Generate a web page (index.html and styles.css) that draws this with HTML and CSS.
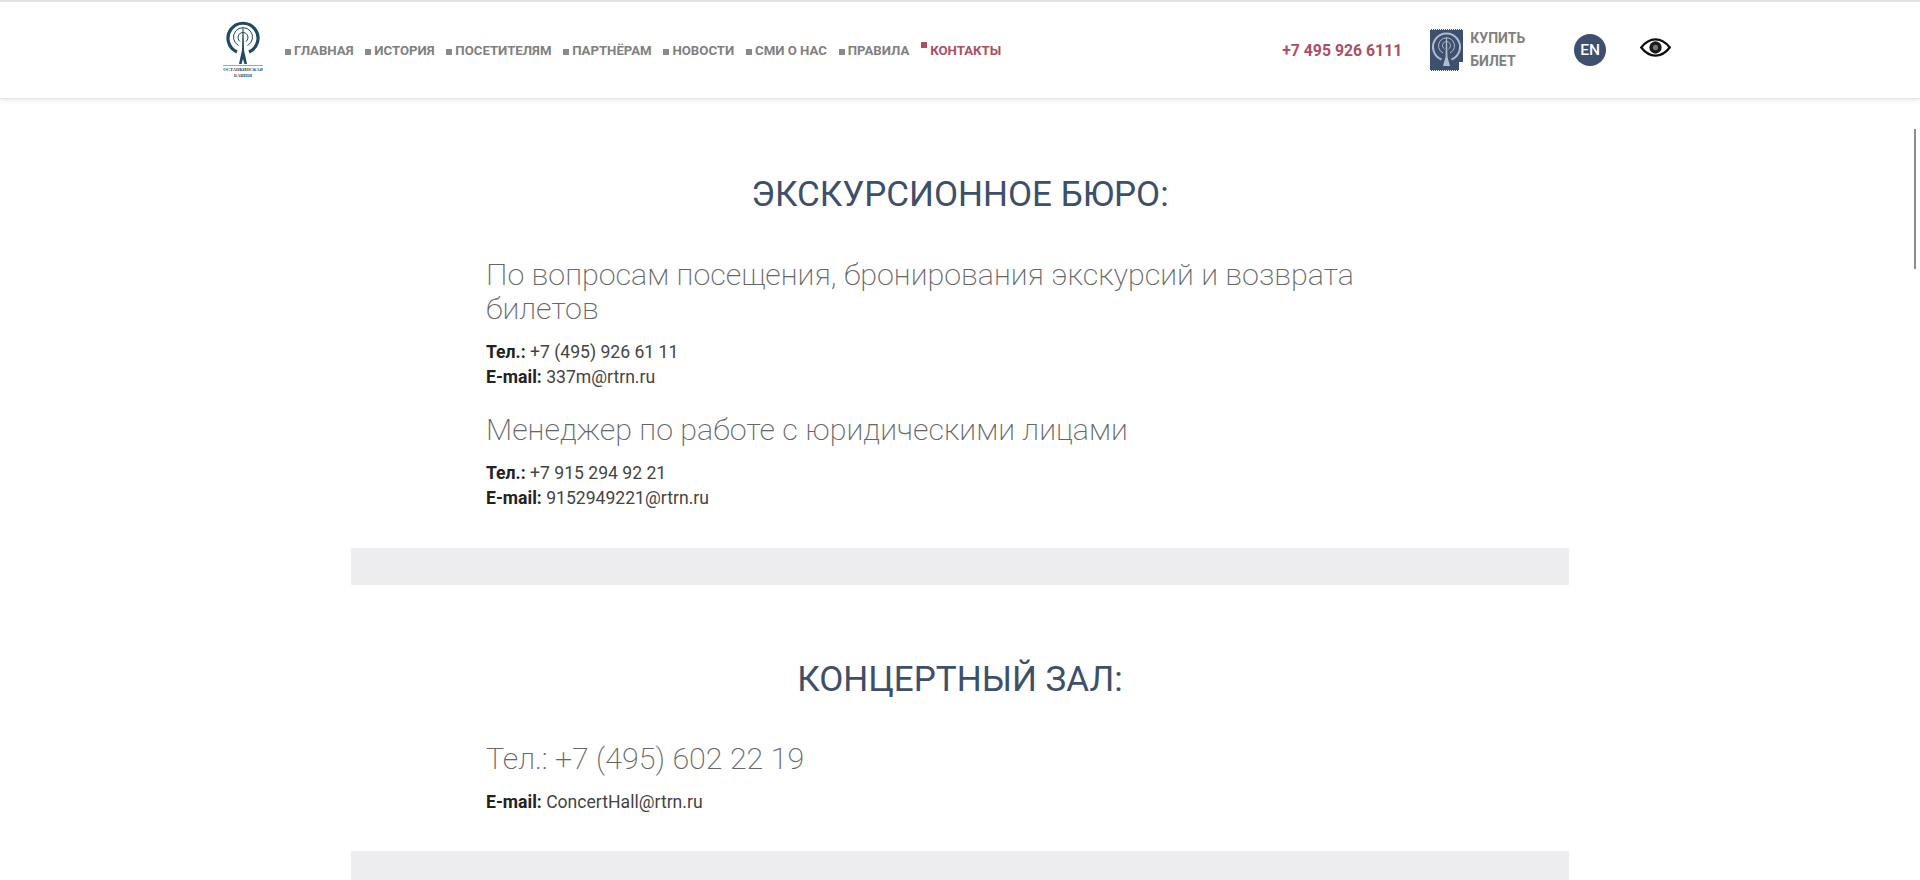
FILE: index.html
```html
<!DOCTYPE html>
<html lang="ru">

<head>
  <meta charset="UTF-8" />
  <meta name="viewport" content="width=device-width, initial-scale=1.0" />
  <title>Контакты</title>
  <link rel="stylesheet" href="styles.css">
</head>

<body>
  <header class="shapka">
    <a class="logo" href="#">
      <svg class="logo-znak" viewBox="0 1 40 44" width="40" height="44">
        <g fill="none" stroke="#1f4a63">
          <path d="M14 33A15 15 0 1 1 26 33" stroke-width="3.200" />
          <path d="M15.500 26.500A9.500 9.500 0 1 1 24.500 26.500" stroke-width="1" />
          <path d="M17 22.500A5 5 0 1 1 23 22.500" stroke-width="1" />
        </g>
        <path d="M19.500 9h1l.5 22 3 14h-2.500l-1.500-5-1.500 5H16l3-14z" fill="#1f4a63" />
      </svg>
      <span class="logo-tekst">ОСТАНКИНСКАЯ<br>БАШНЯ</span>
    </a>

    <nav class="menu">
      <a href="#">ГЛАВНАЯ</a>
      <a href="#">ИСТОРИЯ</a>
      <a href="#">ПОСЕТИТЕЛЯМ</a>
      <a href="#">ПАРТНЁРАМ</a>
      <a href="#">НОВОСТИ</a>
      <a href="#">СМИ О НАС</a>
      <a href="#">ПРАВИЛА</a>
      <a href="#" class="ativo">КОНТАКТЫ</a>
    </nav>

    <a class="telefon" href="#">+7 495 926 6111</a>

    <a class="bilet" href="#">
      <svg viewBox="0 0 33 42" width="33" height="42">
        <path d="M0 0h33v33h-4v9H0z" fill="#3d5070" />
        <path d="M0 .5h33M0 41.500h29" stroke="#fff" stroke-width="1" stroke-dasharray="1 1" />
        <g fill="none" stroke="#b3bccb">
          <path d="M11.500 30.500A13.500 13.500 0 1 1 21.500 30.500" stroke-width="2" />
          <path d="M13 24A8 8 0 1 1 20 24" stroke-width="1" />
          <path d="M14.500 20A4 4 0 1 1 18.500 20" stroke-width="1" />
        </g>
        <path d="M16 8h1l.5 20 2.500 9h-7l2.500-9z" fill="#b3bccb" />
      </svg>
      <span>КУПИТЬ<br>БИЛЕТ</span>
    </a>

    <a class="yazyk" href="#">EN</a>

    <a class="glaz" href="#" aria-label="Версия для слабовидящих">
      <svg viewBox="0 0 32 20" width="31" height="19">
        <path d="M1 10C6 3.500 11 1.500 16 1.500S26 3.500 31 10C26 16.500 21 18.500 16 18.500S6 16.500 1 10z" fill="#fff" stroke="#111" stroke-width="2.400" />
        <circle cx="16" cy="10" r="6.500" fill="#1a1a1a" />
        <circle cx="16" cy="10" r="2.800" fill="#777" />
      </svg>
    </a>
  </header>

  <main class="conteudo">
    <section class="bloco">
      <h2>ЭКСКУРСИОННОЕ БЮРО:</h2>
      <div class="texto">
        <h3>По вопросам посещения, бронирования экскурсий и возврата билетов</h3>
        <p><b>Тел.:</b> +7 (495) 926 61 11<br><b>E-mail:</b> 337m@rtrn.ru</p>
        <h3>Менеджер по работе с юридическими лицами</h3>
        <p><b>Тел.:</b> +7 915 294 92 21<br><b>E-mail:</b> 9152949221@rtrn.ru</p>
      </div>
    </section>
    <div class="faixa"></div>

    <section class="bloco bloco-zal">
      <h2>КОНЦЕРТНЫЙ ЗАЛ:</h2>
      <div class="texto">
        <h3>Тел.: +7 (495) 602 22 19</h3>
        <p><b>E-mail:</b> ConcertHall@rtrn.ru</p>
      </div>
    </section>
    <div class="faixa"></div>
  </main>

  <div class="rolagem"></div>
</body>

</html>
```

FILE: styles.css
```css
body,
html {
  margin: 0;
  padding: 0;
  height: 100%;
  font-family: Roboto, sans-serif;
  background-color: #fff;
  color: #444;
  overflow: hidden;
}

a {
  text-decoration: none;
  color: inherit;
}

.shapka {
  display: flex;
  align-items: center;
  height: 96px;
  padding-left: 222px;
  border-top: 2px solid #e2e2e2;
  border-bottom: 1px solid #e6e6e6;
  box-shadow: 0 1px 6px rgba(0, 0, 0, 0.1);
  background: #fff;
}

.logo {
  display: flex;
  flex-direction: column;
  align-items: center;
  width: 42px;
  margin-top: -1px;
}

.logo-tekst {
  margin-top: 1px;
  padding-top: 1px;
  border-top: 1px solid #9aa8b2;
  font-family: "Liberation Serif", serif;
  font-size: 4.5px;
  font-weight: bold;
  line-height: 6px;
  text-align: center;
  color: #1f4a63;
  white-space: nowrap;
}

.menu {
  display: flex;
  gap: 11.8px;
  margin-left: 21px;
  font-size: 13.2px;
  font-weight: 700;
  color: #808080;
  white-space: nowrap;
}

.menu a::before {
  content: "";
  display: inline-block;
  width: 6px;
  height: 6px;
  margin-right: 3px;
  background: #8a8a8a;
}

.menu .ativo {
  color: #ab4f63;
}

.menu .ativo::before {
  position: relative;
  top: -7px;
  background: #ab4f63;
}

.telefon {
  margin-left: 281px;
  font-size: 15.8px;
  font-weight: 700;
  color: #ab4f63;
  white-space: nowrap;
}

.bilet {
  display: flex;
  align-items: center;
  gap: 7px;
  margin-left: 28px;
  font-size: 14px;
  font-weight: 700;
  line-height: 23px;
  color: #808080;
}

.yazyk {
  display: flex;
  align-items: center;
  justify-content: center;
  width: 32px;
  height: 32px;
  margin-left: 49px;
  border-radius: 50%;
  background: #3d5070;
  color: #fff;
  font-size: 15.5px;
  font-weight: 500;
}

.glaz {
  display: flex;
  margin: -6px 0 0 34px;
}

.bloco {
  width: 948px;
  margin: 0 auto;
  padding-bottom: 14px;
}

.bloco h2 {
  margin: 0;
  padding-top: 76px;
  font-size: 35px;
  font-weight: 400;
  line-height: 40px;
  text-align: center;
  color: #3e5069;
}

.texto {
  padding-top: 43px;
}

.texto h3 {
  margin: 0 0 14px;
  font-size: 30.4px;
  font-weight: 200;
  line-height: 34px;
  color: #666;
}

.texto p {
  margin: 0 0 23px;
  font-size: 17.6px;
  line-height: 25px;
}

.texto b {
  color: #222;
}

.bloco-zal {
  padding-bottom: 13px;
}

.bloco-zal h2 {
  padding-top: 75px;
}

.bloco-zal .texto {
  padding-top: 42px;
}

.faixa {
  width: 1218px;
  height: 37px;
  margin: 0 auto;
  background: #ededef;
}

.rolagem {
  position: fixed;
  top: 129px;
  right: 4px;
  width: 2px;
  height: 140px;
  background: #8c8c8c;
}
```
